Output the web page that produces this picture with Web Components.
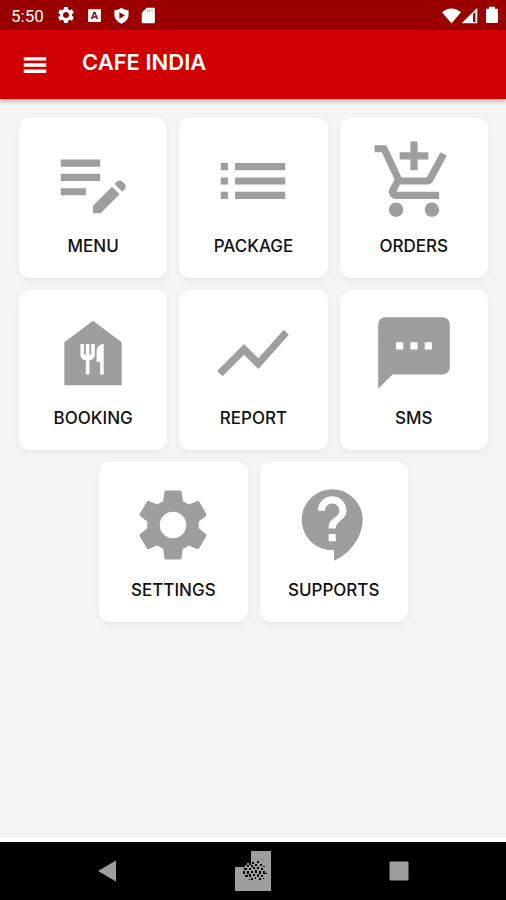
<!DOCTYPE html>
<html lang="en">
<head>
<meta charset="utf-8">
<meta name="viewport" content="width=device-width, initial-scale=1">
<title>Cafe India</title>
<style>
  html, body { height: 100%; }
  body { margin: 0; background: #f4f4f4; font-family: Inter, "Noto Sans", sans-serif; }
</style>
</head>
<body>
<cafe-app></cafe-app>

<script>
const ICONS = {
  menu: 'M3 18.300h18v-2.700H3zM3 13.300h18v-2.700H3zM3 5.700v2.700h18V5.700z',
  note: 'M3 10h11v2H3zM3 8h11V6H3zM3 16h7v-2H3zM18.01 12.87l.71-.71c.39-.39 1.02-.39 1.41 0l.71.71c.39.39.39 1.02 0 1.41l-.71.71zM17.3 13.58l-5.3 5.3V21h2.12l5.3-5.3z',
  list: 'M3 13h2v-2H3v2zm0 4h2v-2H3v2zm0-8h2V7H3v2zm4 4h14v-2H7v2zm0 4h14v-2H7v2zM7 7v2h14V7H7z',
  cart: 'M11 9h2V6h3V4h-3V1h-2v3H8v2h3v3zm-4 9c-1.1 0-1.99.9-1.99 2S5.9 22 7 22s2-.9 2-2-.9-2-2-2zm10 0c-1.1 0-1.99.9-1.99 2s.89 2 1.99 2 2-.9 2-2-.9-2-2-2zm-9.83-3.25l.03-.12.9-1.63h7.45c.75 0 1.41-.41 1.75-1.03l3.86-7.01L19.42 4h-.01l-1.1 2-2.76 5H8.53l-.13-.27L6.16 6l-.95-2-.94-2H1v2h2l3.6 7.59-1.35 2.45c-.16.28-.25.61-.25.96 0 1.1.9 2 2 2h12v-2H7.42c-.13 0-.25-.11-.25-.25z',
  food: 'M12 3L4 9v12h16V9zM12.5 12.5c0 .83-.67 1.5-1.5 1.5v4h-1v-4c-.83 0-1.5-.67-1.5-1.5v-3h1v3h.5v-3h1v3h.5v-3h1zM15 18h-1v-3.5h-1v-3c0-1.1.9-2 2-2z',
  chart: 'M3.5 18.49l6-6.01 4 4L22 6.92l-1.41-1.41-7.09 7.97-4-4L2 16.99z',
  sms: 'M20 2H4c-1.1 0-1.99.9-1.99 2L2 22l4-4h14c1.1 0 2-.9 2-2V4c0-1.1-.9-2-2-2zM9 11H7V9h2v2zm4 0h-2V9h2v2zm4 0h-2V9h2v2z',
  gear: 'M19.14 12.94c.04-.3.06-.61.06-.94 0-.32-.02-.64-.07-.94l2.03-1.58c.18-.14.23-.41.12-.61l-1.92-3.32c-.12-.22-.37-.29-.59-.22l-2.39.96c-.5-.38-1.03-.7-1.62-.94l-.36-2.54c-.04-.24-.24-.41-.48-.41h-3.84c-.24 0-.43.17-.47.41l-.36 2.54c-.59.24-1.13.57-1.62.94l-2.39-.96c-.22-.08-.47 0-.59.22L2.74 8.87c-.12.21-.08.47.12.61l2.03 1.58c-.05.3-.09.63-.09.94s.02.64.07.94l-2.03 1.58c-.18.14-.23.41-.12.61l1.92 3.32c.12.22.37.29.59.22l2.39-.96c.5.38 1.03.7 1.62.94l.36 2.54c.05.24.24.41.48.41h3.84c.24 0 .44-.17.47-.41l.36-2.54c.59-.24 1.13-.56 1.62-.94l2.39.96c.22.08.47 0 .59-.22l1.92-3.32c.12-.22.07-.47-.12-.61l-2.01-1.58zM12 15.7c-2.04 0-3.7-1.66-3.7-3.7s1.66-3.7 3.7-3.7 3.7 1.66 3.7 3.7-1.66 3.7-3.7 3.7z',
  help: 'M11.5 2C6.81 2 3 5.81 3 10.5S6.81 19 11.5 19h.5v3c4.86-2.34 8-7 8-11.5C20 5.81 16.19 2 11.5 2zm1 14.5h-2v-2h2v2zm0-3.5h-2c0-3.25 3-3 3-5 0-1.1-.9-2-2-2s-2 .9-2 2h-2c0-2.21 1.79-4 4-4s4 1.79 4 4c0 2.5-3 2.75-3 5z',
  box: 'M3 3h18v18H3zM10.5 7L6.8 17H9l.7-2h4.6l.7 2h2.2L13.5 7zM12 9l1.5 4.2h-3z',
  shield: 'M12 1C9 3 6 4 2 4.500V11c0 6 4 10 10 12.500C18 21 22 17 22 11V4.500C18 4 15 3 12 1zM9 7.500l8 4.500-8 4.500z',
  sd: 'M19 1H9.500L2.500 8v13c0 1.100.9 2 2 2H19c1.100 0 2-.9 2-2V3c0-1.100-.9-2-2-2zM9.500 4.500h1v2h-1zM13 4.500h1v2h-1zM16.500 4.500h1v2h-1z',
  wifi: 'M12 3C7.500 3 3.500 4.700 0 8l12 14L24 8c-3.500-3.300-7.500-5-12-5z',
  signal: 'M23 1v22H1zM17 10V21h3.300V7z',
  battery: 'M16 3.500V1H8v2.500H5.500C4.700 3.500 4 4.200 4 5v16c0 .8.700 1.500 1.500 1.500h13c.8 0 1.500-.7 1.500-1.500V5c0-.8-.7-1.500-1.500-1.500z',
  back: 'M3 12L21 1.500v21z',
  square: 'M3.500 2.500h17q1 0 1 1v17q0 1-1 1h-17q-1 0-1-1v-17q0-1 1-1z'
};

class CafeIcon extends HTMLElement {
  connectedCallback() {
    const root = this.attachShadow({ mode: 'open' });
    root.innerHTML = `<style>
      :host { display: block; flex: none; width: var(--icon-size, 24px); height: var(--icon-size, 24px); }
      svg { display: block; width: 100%; height: 100%; fill: currentColor; fill-rule: evenodd; }
    </style><svg viewBox="0 0 24 24" aria-hidden="true"><path d="${ICONS[this.getAttribute('name')]}"/></svg>`;
  }
}

class StatusBar extends HTMLElement {
  connectedCallback() {
    const root = this.attachShadow({ mode: 'open' });
    root.innerHTML = `<style>
      :host { display: flex; justify-content: space-between; align-items: center; box-sizing: border-box;
        height: 30px; padding: 0 5px 0 11px; background: #9b0000; color: #fff; flex: none; }
      div { display: flex; align-items: center; }
      time { font: 400 17px/20px Roboto, sans-serif; padding-top: 2px; }
      .left { gap: 10px; }
      cafe-icon { --icon-size: 17px; }
      .gear { --icon-size: 20px; margin-left: 2px; }
      .wifi { --icon-size: 19px; }
      .battery { --icon-size: 18px; margin-left: 5px; }
    </style>
    <div class="left"><time datetime="17:50">5:50</time><cafe-icon class="gear" name="gear"></cafe-icon><cafe-icon name="box"></cafe-icon><cafe-icon name="shield"></cafe-icon><cafe-icon name="sd"></cafe-icon></div>
    <div><cafe-icon class="wifi" name="wifi"></cafe-icon><cafe-icon name="signal"></cafe-icon><cafe-icon class="battery" name="battery"></cafe-icon></div>`;
  }
}

class AppHeader extends HTMLElement {
  connectedCallback() {
    const root = this.attachShadow({ mode: 'open' });
    root.innerHTML = `<style>
      :host { display: flex; align-items: center; gap: 28px; box-sizing: border-box; height: 69px; padding: 0 16px;
        background: #d10000; color: #fff; flex: none; box-shadow: 0 2px 5px rgba(0,0,0,.3); }
      button { display: block; border: 0; background: none; color: inherit; padding: 4px; cursor: pointer; }
      cafe-icon { --icon-size: 30px; }
      h1 { margin: 0; padding-bottom: 6px; font-size: 22px; line-height: 28px; font-weight: 600; }
    </style>
    <button type="button" aria-label="Open navigation"><cafe-icon name="menu"></cafe-icon></button>
    <h1><slot></slot></h1>`;
  }
}

class MenuTile extends HTMLElement {
  connectedCallback() {
    const root = this.attachShadow({ mode: 'open' });
    root.innerHTML = `<style>
      :host { display: block; }
      button { display: flex; flex-direction: column; align-items: center; box-sizing: border-box; width: 100%;
        border: 0; border-radius: 11px; padding: 20px 0; background: #fff; color: #111;
        font: 500 17px/24px Inter, "Noto Sans", sans-serif; cursor: pointer;
        box-shadow: 0 3px 6px rgba(0,0,0,.05); }
      cafe-icon { --icon-size: 86px; color: #9e9e9e; margin-bottom: 10px; }
    </style>
    <button type="button"><cafe-icon name="${this.getAttribute('icon')}"></cafe-icon><span><slot></slot></span></button>`;
  }
}

class SystemNav extends HTMLElement {
  connectedCallback() {
    const root = this.attachShadow({ mode: 'open' });
    root.innerHTML = `<style>
      :host { display: flex; justify-content: center; align-items: center; gap: 102px; box-sizing: border-box;
        height: 62px; border-top: 4px solid #fff; background: #000; color: #9e9e9e; flex: none; }
      button { display: flex; justify-content: center; align-items: center; width: 44px; height: 48px; border: 0; padding: 0; background: none; color: inherit; cursor: pointer; }
      cafe-icon { --icon-size: 24px; }
      svg { display: block; width: 36px; height: 40px; fill: currentColor; }
    </style>
    <button type="button" aria-label="Back"><cafe-icon name="back"></cafe-icon></button>
    <button type="button" aria-label="Home"><svg viewBox="0 0 36 40" aria-hidden="true"><path d="M16 0h20v40H0V16h16zM12 12h2v2h-2zM10 14h2v2h-2zM14 14h2v2h-2z"/>
      <path fill="#000" d="M17 11h2v2h-2zM22 10h2v2h-2zM27 8h1v1h-1zM25 13h2v2h-2zM20 13h2v2h-2zM16 14h2v2h-2zM28 15h2v1h-2zM9 17h3v2H9zM14 17h2v2h-2zM18 16h2v2h-2zM22 16h2v2h-2zM26 17h2v2h-2zM8 20h2v3H8zM12 20h2v3h-2zM16 20h2v2h-2zM20 19h2v3h-2zM24 20h2v3h-2zM28 20h2v3h-2zM30 22h2v1h-2zM10 24h3v2h-3zM14 23h2v3h-2zM18 23h2v2h-2zM22 23h2v3h-2zM26 24h2v2h-2zM16 27h2v2h-2zM20 26h1v2h-1zM24 27h2v2h-2zM14 28h1v1h-1zM28 27h1v1h-1z"/></svg></button>
    <button type="button" aria-label="Recent apps"><cafe-icon name="square"></cafe-icon></button>`;
  }
}

class CafeApp extends HTMLElement {
  connectedCallback() {
    const root = this.attachShadow({ mode: 'open' });
    root.innerHTML = `<style>
      :host { display: flex; flex-direction: column; min-height: 100%; }
      main { flex: 1; display: flex; flex-wrap: wrap; justify-content: center; align-content: flex-start;
        gap: 12px; padding: 19px 18px 19px 19px; }
      menu-tile { width: calc((100% - 24px) / 3); }
    </style>
    <status-bar></status-bar>
    <app-header>CAFE INDIA</app-header>
    <main>
      <menu-tile icon="note">MENU</menu-tile>
      <menu-tile icon="list">PACKAGE</menu-tile>
      <menu-tile icon="cart">ORDERS</menu-tile>
      <menu-tile icon="food">BOOKING</menu-tile>
      <menu-tile icon="chart">REPORT</menu-tile>
      <menu-tile icon="sms">SMS</menu-tile>
      <menu-tile icon="gear">SETTINGS</menu-tile>
      <menu-tile icon="help">SUPPORTS</menu-tile>
    </main>
    <system-nav></system-nav>`;
  }
}

customElements.define('cafe-icon', CafeIcon);
customElements.define('status-bar', StatusBar);
customElements.define('app-header', AppHeader);
customElements.define('menu-tile', MenuTile);
customElements.define('system-nav', SystemNav);
customElements.define('cafe-app', CafeApp);
</script>
</body>
</html>
